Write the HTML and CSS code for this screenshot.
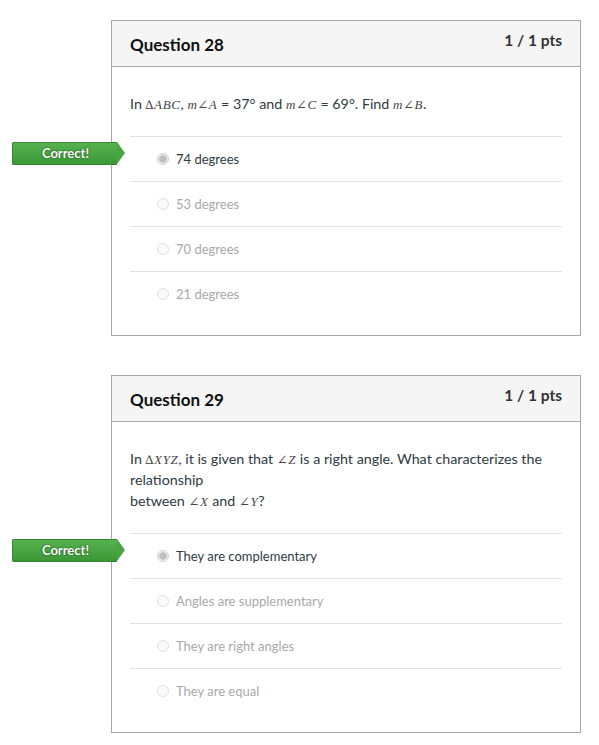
FILE: index.html
```html
<!DOCTYPE html>
<html>
<head>
<meta charset="utf-8">
<link rel="stylesheet" href="styles.css">
</head>
<body>
<div class="quiz">
  <div class="question">
    <div class="q-header">
      <h2 class="q-title">Question 28</h2>
      <span class="q-pts">1 / 1 pts</span>
    </div>
    <div class="q-body">
      <p class="q-text">In <span class="m">∆ABC</span>, <span class="m">m∠A</span> = 37° and <span class="m">m∠C</span> = 69°. Find <span class="m">m∠B</span>.</p>
      <ul class="answers">
        <li class="answer selected"><span class="badge">Correct!</span><span class="radio"></span>74 degrees</li>
        <li class="answer"><span class="radio"></span>53 degrees</li>
        <li class="answer"><span class="radio"></span>70 degrees</li>
        <li class="answer"><span class="radio"></span>21 degrees</li>
      </ul>
    </div>
  </div>

  <div class="question">
    <div class="q-header">
      <h2 class="q-title">Question 29</h2>
      <span class="q-pts">1 / 1 pts</span>
    </div>
    <div class="q-body">
      <p class="q-text">In <span class="m">∆XYZ</span>, it is given that <span class="m">∠Z</span> is a right angle. What characterizes the<br>relationship<br>between <span class="m">∠X</span> and <span class="m">∠Y</span>?</p>
      <ul class="answers">
        <li class="answer selected"><span class="badge">Correct!</span><span class="radio"></span>They are complementary</li>
        <li class="answer"><span class="radio"></span>Angles are supplementary</li>
        <li class="answer"><span class="radio"></span>They are right angles</li>
        <li class="answer"><span class="radio"></span>They are equal</li>
      </ul>
    </div>
  </div>
</div>
</body>
</html>
```

FILE: styles.css
```css
* { box-sizing: border-box; }
html, body { margin: 0; padding: 0; background: #fff; }
body {
  font-family: Lato, "Open Sans", "Liberation Sans", sans-serif;
  color: #2d3b45;
}
.quiz {
  padding: 20px 19px 0 111px;
  display: flex;
  flex-direction: column;
  gap: 39px;
}
.question {
  border: 1px solid #a8a8a8;
  width: 470px;
}
.q-header {
  background: #f5f5f5;
  border-bottom: 1px solid #a8a8a8;
  height: 46px;
  display: flex;
  justify-content: space-between;
  align-items: flex-start;
  padding: 0 18px;
}
.q-title {
  margin: 14px 0 0;
  font-size: 17px;
  font-weight: 700;
  line-height: 20px;
  color: #111;
}
.q-pts {
  margin-top: 10px;
  font-size: 15.5px;
  font-weight: 700;
  line-height: 18px;
  color: #333;
}
.q-body {
  padding: 26px 18px 19px;
}
.q-text {
  margin: 0 0 22px;
  font-size: 14.3px;
  line-height: 21px;
  color: #2d3b45;
}
.m {
  font-family: "Liberation Serif", "DejaVu Serif", serif;
  font-style: italic;
  font-size: 13px;
  line-height: 1;
  letter-spacing: 0.6px;
  color: #444;
}
.answers {
  list-style: none;
  margin: 0;
  padding: 0;
}
.answer {
  position: relative;
  height: 45px;
  border-top: 1px solid #e3e3e3;
  display: flex;
  align-items: center;
  padding-left: 27px;
  font-size: 13px;
  color: #a9a9a9;
}
.answer.selected { color: #2d3b45; }
.radio {
  width: 12px;
  height: 12px;
  border-radius: 50%;
  border: 1px solid #e2e2e2;
  background: #fafafa;
  margin-right: 7px;
  flex: none;
}
.selected .radio {
  border-color: #cfcfcf;
  background: radial-gradient(circle, #c0c0c0 0 3.5px, #eeeeee 4px);
}
.badge {
  position: absolute;
  left: -118px;
  top: 5px;
  width: 105px;
  height: 23px;
  background: linear-gradient(#55b24f, #3c9837);
  border: 1px solid #358531;
  border-right: none;
  border-radius: 2px 0 0 2px;
  color: #fff;
  font-size: 13px;
  font-weight: 700;
  line-height: 20px;
  text-align: center;
  text-shadow: 0 0 2px #245d21, 0 0 1px #245d21;
  padding-left: 1px;
}
.badge::after {
  content: "";
  position: absolute;
  right: -8px;
  top: -1px;
  width: 0;
  height: 0;
  border-top: 11.5px solid transparent;
  border-bottom: 11.5px solid transparent;
  border-left: 8px solid #47a542;
}
```
